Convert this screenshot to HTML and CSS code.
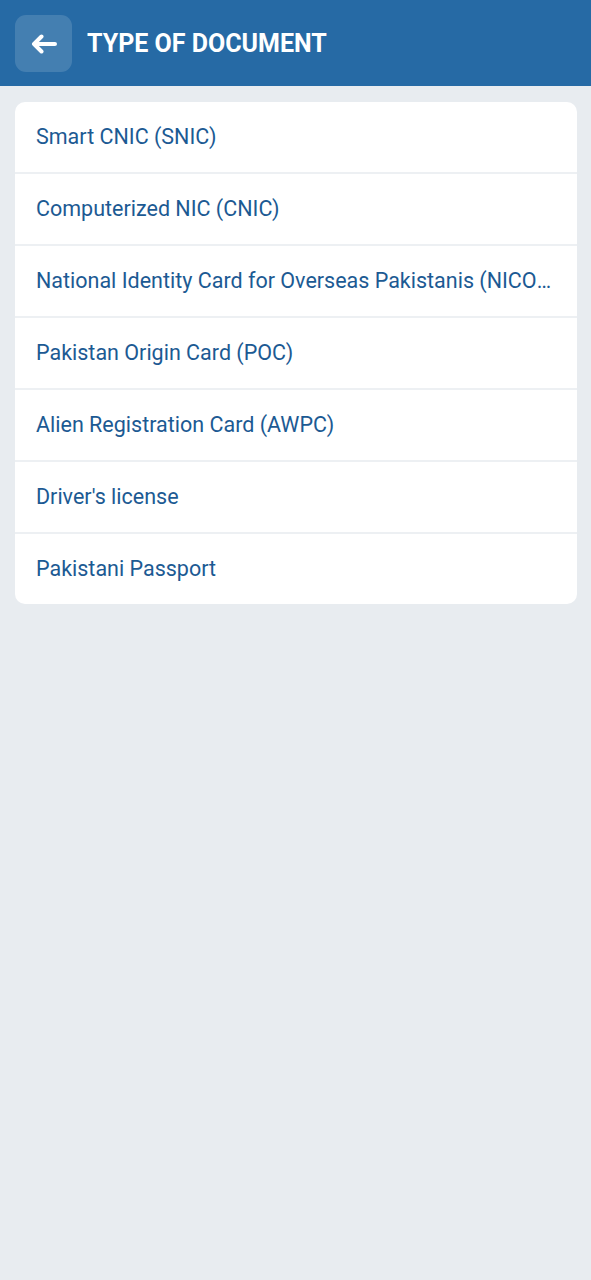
FILE: index.html
```html
<!DOCTYPE html>
<html lang="en">
<head>
<meta charset="utf-8">
<title>Type of Document</title>
<link rel="stylesheet" href="styles.css">
</head>
<body>
<header class="topbar">
  <button class="back" aria-label="Back">
    <svg width="28" height="20" viewBox="0 0 28 20" aria-hidden="true">
      <path d="M25 10H4M11.5 2.5L4 10l7.5 7.5" fill="none" stroke="#fff" stroke-width="4" stroke-linecap="round" stroke-linejoin="round"/>
    </svg>
  </button>
  <h1 class="title">TYPE OF DOCUMENT</h1>
</header>
<main class="content">
  <ul class="list">
    <li class="item">Smart CNIC (SNIC)</li>
    <li class="item">Computerized NIC (CNIC)</li>
    <li class="item">National Identity Card for Overseas Pakistanis (NICOP)</li>
    <li class="item">Pakistan Origin Card (POC)</li>
    <li class="item">Alien Registration Card (AWPC)</li>
    <li class="item">Driver's license</li>
    <li class="item">Pakistani Passport</li>
  </ul>
</main>
</body>
</html>
```
FILE: styles.css
```css
* { box-sizing: border-box; }
html, body { margin: 0; padding: 0; }
body {
  background: #e8ecf0;
  font-family: Roboto, "Liberation Sans", sans-serif;
  min-height: 1280px;
}
.topbar {
  height: 86px;
  background: #266aa5;
  display: flex;
  align-items: center;
  padding: 0 15px;
  gap: 15px;
}
.back {
  width: 57px;
  height: 57px;
  border: 0;
  border-radius: 11px;
  background: rgba(255,255,255,0.14);
  display: flex;
  align-items: center;
  justify-content: center;
  padding: 0;
  margin-top: 1px;
  flex: none;
}
.title {
  margin: 0;
  color: #fff;
  font-size: 25px;
  font-weight: 700;
  letter-spacing: 0;
}
.content {
  padding: 16px 14px 15px 15px;
}
.list {
  list-style: none;
  margin: 0;
  padding: 0;
  background: #fff;
  border-radius: 10px;
  overflow: hidden;
}
.item {
  display: block;
  height: 72px;
  line-height: 69px;
  padding: 0 24px 0 21px;
  color: #1c5a93;
  font-size: 21.5px;
  border-bottom: 2px solid #edf0f3;
  white-space: nowrap;
  overflow: hidden;
  text-overflow: ellipsis;
}
.item:last-child { border-bottom: 0; height: 70px; }
```
